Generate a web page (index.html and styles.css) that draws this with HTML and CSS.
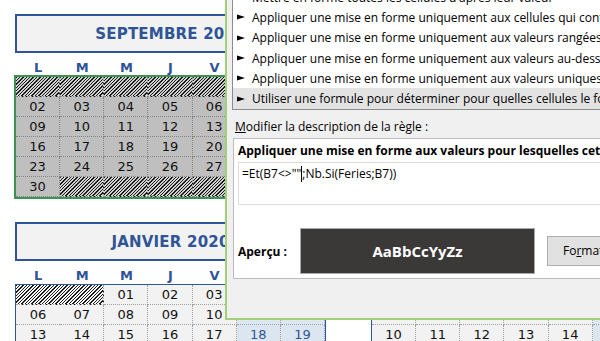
FILE: index.html
```html
<!DOCTYPE html>
<html lang="fr">
<head>
<meta charset="utf-8">
<title>Mise en forme conditionnelle</title>
<link rel="stylesheet" href="styles.css">
</head>
<body>
<div class="sheet">
  <div class="cals">
    <section class="cal sel">
      <div class="cal-head">SEPTEMBRE 2019</div>
      <div class="names"><span>L</span><span>M</span><span>M</span><span>J</span><span>V</span><span>S</span><span>D</span></div>
      <div class="days">
        <div class="h"></div><div class="h"></div><div class="h"></div><div class="h"></div><div class="h"></div><div class="h"></div><div>01</div>
        <div>02</div><div>03</div><div>04</div><div>05</div><div>06</div><div>07</div><div>08</div>
        <div>09</div><div>10</div><div>11</div><div>12</div><div>13</div><div>14</div><div>15</div>
        <div>16</div><div>17</div><div>18</div><div>19</div><div>20</div><div>21</div><div>22</div>
        <div>23</div><div>24</div><div>25</div><div>26</div><div>27</div><div>28</div><div>29</div>
        <div>30</div><div class="h"></div><div class="h"></div><div class="h"></div><div class="h"></div><div class="h"></div><div class="h"></div>
      </div>
    </section>
    <section class="cal">
      <div class="cal-head">OCTOBRE 2019</div>
      <div class="names"><span>L</span><span>M</span><span>M</span><span>J</span><span>V</span><span>S</span><span>D</span></div>
      <div class="days">
        <div class="h"></div><div>01</div><div>02</div><div>03</div><div>04</div><div class="we">05</div><div class="we">06</div>
        <div>07</div><div>08</div><div>09</div><div>10</div><div>11</div><div class="we">12</div><div class="we">13</div>
        <div>14</div><div>15</div><div>16</div><div>17</div><div>18</div><div class="we">19</div><div class="we">20</div>
        <div>21</div><div>22</div><div>23</div><div>24</div><div>25</div><div class="we">26</div><div class="we">27</div>
        <div>28</div><div>29</div><div>30</div><div>31</div><div class="h"></div><div class="h"></div><div class="h"></div>
      </div>
    </section>
    <section class="cal">
      <div class="cal-head">JANVIER 2020</div>
      <div class="names"><span>L</span><span>M</span><span>M</span><span>J</span><span>V</span><span>S</span><span>D</span></div>
      <div class="days">
        <div class="h span2"></div><div>01</div><div>02</div><div>03</div><div class="we">04</div><div class="we">05</div>
        <div>06</div><div>07</div><div>08</div><div>09</div><div>10</div><div class="we">11</div><div class="we">12</div>
        <div>13</div><div>14</div><div>15</div><div>16</div><div>17</div><div class="we">18</div><div class="we">19</div>
        <div>20</div><div>21</div><div>22</div><div>23</div><div>24</div><div class="we">25</div><div class="we">26</div>
      </div>
    </section>
    <section class="cal">
      <div class="cal-head">FÉVRIER 2020</div>
      <div class="names"><span>L</span><span>M</span><span>M</span><span>J</span><span>V</span><span>S</span><span>D</span></div>
      <div class="days">
        <div class="h"></div><div class="h"></div><div class="h"></div><div class="h"></div><div class="h"></div><div class="we">01</div><div class="we">02</div>
        <div>03</div><div>04</div><div>05</div><div>06</div><div>07</div><div class="we">08</div><div class="we">09</div>
        <div>10</div><div>11</div><div>12</div><div>13</div><div>14</div><div class="we">15</div><div class="we">16</div>
        <div>17</div><div>18</div><div>19</div><div>20</div><div>21</div><div class="we">22</div><div class="we">23</div>
      </div>
    </section>
  </div>
</div>

<div class="dialog">
  <ul class="rules">
    <li><svg class="arrow" width="8" height="6" viewBox="0 0 8 6"><polygon points="0,0.6 8,3 0,5.4"/></svg>Mettre en forme toutes les cellules d'après leur valeur</li>
    <li><svg class="arrow" width="8" height="6" viewBox="0 0 8 6"><polygon points="0,0.6 8,3 0,5.4"/></svg>Appliquer une mise en forme uniquement aux cellules qui contiennent</li>
    <li><svg class="arrow" width="8" height="6" viewBox="0 0 8 6"><polygon points="0,0.6 8,3 0,5.4"/></svg>Appliquer une mise en forme uniquement aux valeurs rangées parmi les premières ou les dernières valeurs</li>
    <li><svg class="arrow" width="8" height="6" viewBox="0 0 8 6"><polygon points="0,0.6 8,3 0,5.4"/></svg>Appliquer une mise en forme uniquement aux valeurs au-dessus ou en dessous de la moyenne</li>
    <li><svg class="arrow" width="8" height="6" viewBox="0 0 8 6"><polygon points="0,0.6 8,3 0,5.4"/></svg>Appliquer une mise en forme uniquement aux valeurs uniques ou aux doublons</li>
    <li class="active"><svg class="arrow" width="8" height="6" viewBox="0 0 8 6"><polygon points="0,0.6 8,3 0,5.4"/></svg>Utiliser une formule pour déterminer pour quelles cellules le format sera appliqué</li>
  </ul>
  <div class="label"><u>M</u>odifier la description de la règle :</div>
  <div class="panel">
    <div class="panel-title">Appliquer une mise en forme aux valeurs pour lesquelles cette formule est vraie :</div>
    <div class="formula">=Et(B7&lt;&gt;""<span class="caret"></span>;Nb.Si(Feries;B7))</div>
    <div class="preview-row">
      <div class="preview-label">Aperçu :</div>
      <div class="preview">AaBbCcYyZz</div>
      <div class="btn">Fo<u>r</u>mat...</div>
    </div>
  </div>
</div>
</body>
</html>
```

FILE: styles.css
```css
html, body {
  margin: 0;
  padding: 0;
}
body {
  width: 600px;
  height: 341px;
  overflow: hidden;
  position: relative;
  background: #ffffff;
  font-family: "DejaVu Sans", sans-serif;
}

/* ---------- spreadsheet calendars ---------- */
.sheet {
  padding: 14px 0 0 15px;
}
.cals {
  display: grid;
  grid-template-columns: 311px 311px;
  column-gap: 45px;
  row-gap: 24px;
  width: max-content;
}
.cal-head {
  height: 39px;
  box-sizing: border-box;
  border: 2px solid #2f5597;
  background: #f2f2f2;
  display: flex;
  align-items: center;
  justify-content: center;
  color: #2f5597;
  font-weight: bold;
  font-size: 15px;
  letter-spacing: 0.2px;
}
.names {
  display: grid;
  grid-template-columns: repeat(7, 1fr);
  height: 23px;
  align-items: end;
  padding: 0 1px;
  box-sizing: border-box;
  color: #2f5597;
  font-weight: bold;
  font-size: 13px;
  line-height: 16px;
  text-align: center;
}
.days {
  display: grid;
  grid-template-columns: repeat(7, 1fr);
  border: 1px solid #2f5597;
}
.days > div {
  height: 20px;
  box-sizing: border-box;
  border-right: 1px dotted #a0a0a0;
  border-bottom: 1px dotted #a0a0a0;
  display: flex;
  align-items: center;
  justify-content: center;
  font-size: 13px;
  color: #111;
  background: #f2f2f2;
}
.days > div:nth-child(7n) {
  border-right: 0;
}
.days > .we {
  background: #dce6f1;
  color: #2f5597;
}
.days > .h {
  background: repeating-linear-gradient(135deg, #1c1c1c 0 1px, #f4f4f4 1px 2.4px);
}
.days > .span2 {
  grid-column: span 2;
}

/* selected (Sept) */
.cal.sel .days {
  border-color: #3a9350;
  outline: 1px solid #3a9350;
}
.cal.sel .days > div {
  background: #bfbfbf;
  border-color: #858585;
  color: #111;
}
.cal.sel .days > .h {
  background: repeating-linear-gradient(135deg, #1c1c1c 0 1px, #cfcfcf 1px 2.4px);
}

/* ---------- dialog ---------- */
.dialog {
  position: absolute;
  left: 225px;
  top: -20px;
  width: 400px;
  height: 338px;
  border-left: 2px solid #a3cf78;
  border-bottom: 2px solid #a3cf78;
  background: #f0f0f0;
  padding-left: 5px;
  font-family: "Open Sans", "Noto Sans", sans-serif;
  font-size: 12px;
  color: #000;
}
.rules {
  list-style: none;
  margin: 0;
  padding: 7px 0 0 0;
  background: #ffffff;
  border: 1px solid #8c8c8c;
  border-top: 0;
  border-right: 0;
}
.rules li {
  height: 20.3px;
  display: flex;
  align-items: center;
  padding-left: 4px;
  white-space: nowrap;
  overflow: hidden;
}
.rules li.active {
  background: #e3e3e3;
}
.arrow {
  flex: none;
  margin-right: 7px;
  fill: #000;
}
.label {
  margin: 9px 0 0 3px;
  line-height: 16px;
  white-space: nowrap;
}
.panel {
  margin: 3px 0 0 1px;
  background: #ffffff;
  border: 1px solid #bcbcbc;
  border-right: 0;
  padding: 3px 0 4px 4px;
}
.panel-title {
  font-weight: bold;
  line-height: 18px;
  white-space: nowrap;
  overflow: hidden;
}
.formula {
  margin-top: 2px;
  height: 43px;
  box-sizing: border-box;
  border: 1px solid #dcdcdc;
  border-right: 0;
  padding: 2px 0 0 3px;
  line-height: 18px;
  white-space: nowrap;
}
.caret {
  display: inline-block;
  width: 1px;
  height: 16px;
  background: #000;
  vertical-align: -4px;
}
.preview-row {
  margin-top: 23px;
  display: flex;
  align-items: center;
}
.preview-label {
  width: 62px;
  flex: none;
  font-weight: bold;
  line-height: 18px;
  padding-top: 3px;
}
.preview {
  width: 235px;
  height: 46px;
  flex: none;
  box-sizing: border-box;
  border: 1px solid #a8a8a8;
  background: #3b3838;
  color: #ffffff;
  font-weight: bold;
  font-size: 15px;
  display: flex;
  align-items: center;
  justify-content: center;
}
.btn {
  margin-left: 12px;
  width: 100px;
  height: 30px;
  flex: none;
  box-sizing: border-box;
  border: 1px solid #adadad;
  background: #e1e1e1;
  display: flex;
  align-items: center;
  padding-left: 15px;
}
```
